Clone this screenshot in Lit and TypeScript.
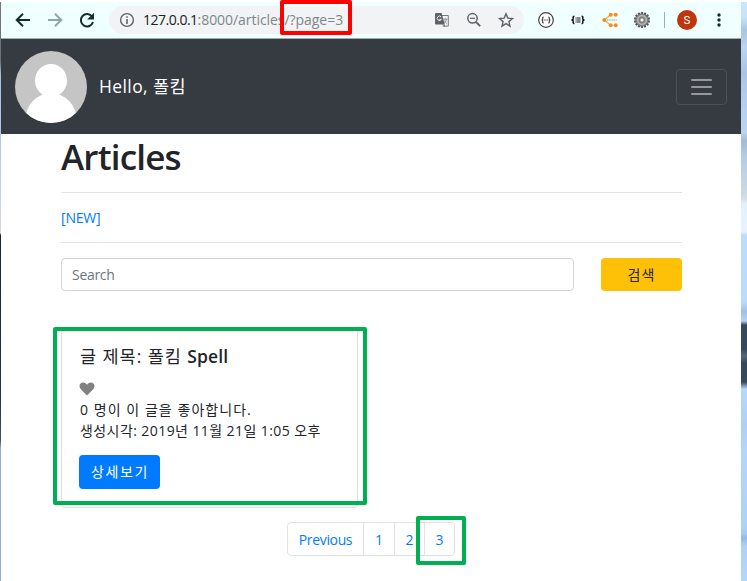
import { LitElement, html, css, svg } from "lit";
import { customElement } from "lit/decorators.js";

@customElement("browser-bar")
class BrowserBar extends LitElement {
  static styles = css`
    :host { display: flex; align-items: center; box-sizing: border-box; height: 37px; flex: none; background: #f0ffff; border-bottom: 1px solid #9aaead; padding-left: 11px; font-family: "Open Sans", "Noto Sans", sans-serif; }
    svg { display: block; flex: none; overflow: visible; }
    .nav { display: flex; gap: 12px; margin-right: 13px; }
    .omni { display: flex; align-items: center; width: 415px; height: 28px; border-radius: 14px; background: #f1f3f4; box-sizing: border-box; padding: 0 10px 0 10px; }
    .url { flex: 1; margin-left: 8px; font-size: 14px; line-height: 28px; white-space: pre; color: #80868b; letter-spacing: -0.05px; }
    .host { color: #202124; letter-spacing: -0.5px; }
    .tools { display: flex; gap: 16px; }
    .ext { display: flex; gap: 16px; margin-left: 14px; align-items: center; }
    .sep { width: 1px; height: 16px; background: #9aaead; margin: 0 12px 0 14px; }
    .user { width: 20px; height: 20px; border-radius: 50%; background: #bf360c; color: #fff; font: 11.5px/20px Roboto, sans-serif; text-align: center; margin-right: 20px; }
  `;
  render() {
    const teeth = Array.from({ length: 14 }, (_, i) => svg`<rect x="6.900" y="-0.100" width="2.200" height="3" rx=".6" transform="rotate(${(i * 360) / 14} 8 8)" />`);
    return html`
      <div class="nav">
        <svg width="20" height="20" viewBox="0 0 20 20" fill="none" stroke="#112f2c" stroke-width="2"><path d="M18 10H5M11 3.700 4.700 10l6.300 6.300" /></svg>
        <svg width="20" height="20" viewBox="0 0 20 20" fill="none" stroke="#8fa8a6" stroke-width="2"><path d="M4 10h13M11 3.700l6.300 6.300-6.300 6.300" /></svg>
        <svg width="20" height="20" viewBox="0 0 20 20"><path d="M16.200 6.700A6.200 6.200 0 1 0 17 12" fill="none" stroke="#112f2c" stroke-width="2" /><path d="M18 2.800v6.700h-6.800z" fill="#112f2c" /></svg>
      </div>
      <div class="omni">
        <svg width="16" height="16" viewBox="0 0 16 16"><circle cx="8" cy="8" r="6.400" fill="none" stroke="#5f6368" stroke-width="1.400" /><path d="M7.200 4.200h1.600v1.600H7.200zM7.200 7h1.600v5H7.200z" fill="#5f6368" /></svg>
        <div class="url"><span class="host">127.0.0.1</span>:8000/articles/?page=3</div>
        <div class="tools">
          <svg width="16" height="16" viewBox="0 0 16 16"><path d="M6 3.500h8.300v10.600H8.600" fill="none" stroke="#777b7f" stroke-width="1" /><path d="M2 1h5.600l3.200 11.400H2q-1 0-1-1V2q0-1 1-1z" fill="#5f6368" /><path d="M7.200 4.900a2.200 2.200 0 1 0 .2 2.400H5.500" fill="none" stroke="#f1f3f4" stroke-width="1" /><path d="M9.300 7.200h4M11.300 6.200v1M12.700 7.400q-.7 2.700-3 4M10.300 8.500q.8 2 2.500 3M8.500 12.400l2 2.300V12.400" fill="none" stroke="#777b7f" stroke-width=".8" /></svg>
          <svg width="16" height="16" viewBox="0 0 16 16" fill="none" stroke="#5f6368" stroke-width="1.500"><circle cx="6.500" cy="6.300" r="4.700" /><path d="m10 10 4.200 4.200" stroke-width="1.800" /><path d="M4 6.300h5" stroke-width="1.200" /></svg>
          <svg width="16" height="16" viewBox="0 0 16 16"><path d="m8 1.800 1.800 4.300 4.700.4-3.600 3.100 1.100 4.600-4-2.500-4 2.500 1.100-4.600L1.500 6.500l4.700-.4z" fill="none" stroke="#5f6368" stroke-width="1.400" /></svg>
        </div>
      </div>
      <div class="ext">
        <svg width="16" height="16" viewBox="0 0 16 16" fill="none" stroke="#444"><circle cx="8" cy="8" r="7.300" fill="#fff" stroke-width="1.200" /><path d="M5.700 5q-1.200 0-1 1.500T3.500 8q1.400 0 1.200 1.500t1 1.500M10.300 5q1.200 0 1 1.500T12.500 8q-1.400 0-1.200 1.500t-1 1.500" stroke-width="1.200" /><path d="M6.200 8h3.700" stroke-width="1.200" stroke-dasharray="1 .4" /></svg>
        <svg width="16" height="16" viewBox="0 0 16 16" fill="none" stroke="#111"><path d="M4.400 4.300q-1.500 0-1.200 1.900T1.500 8q2 0 1.700 1.800t1.200 1.900M11.600 4.300q1.500 0 1.200 1.900T14.500 8q-2 0-1.700 1.800t-1.200 1.900" stroke-width="1.500" /><path d="M5.500 6.500h5M5.500 8.500h5M5.500 10.500h5" transform="translate(0 -.5)" stroke-width="1" stroke-dasharray="1.200 .4 3.400 0" /></svg>
        <svg width="16" height="16" viewBox="0 0 16 16"><path d="M8.500 2.700 2.500 8l6 5.300" fill="none" stroke="#fb9a2c" stroke-width="1.100" /><path d="M8.500 2.700h5M8.500 13.300h5" stroke="#fcc07d" stroke-width=".8" /><g fill="#fb8c1a"><circle cx="8.700" cy="2.800" r="2" /><circle cx="13.700" cy="2.800" r="2" /><circle cx="2.300" cy="8" r="2" /><circle cx="8.700" cy="13.200" r="2" /><circle cx="13.700" cy="13.200" r="2" /></g><path d="M5 8h10.500" stroke="#b9c4b8" stroke-width="1.400" stroke-dasharray="1.200 .5" /></svg>
        <svg width="16" height="16" viewBox="0 0 16 16"><g fill="#555">${teeth}</g><circle cx="8" cy="8" r="6.200" fill="#8b8b8b" stroke="#6a6a6a" stroke-width=".6" /><circle cx="8" cy="8" r="4.300" fill="none" stroke="#bcbcbc" stroke-width="1.300" /><circle cx="8" cy="8" r="2.200" fill="#f2f2f2" stroke="#666" stroke-width=".9" /></svg>
      </div>
      <div class="sep"></div>
      <div class="user">S</div>
      <svg width="4" height="16" viewBox="0 0 4 16" fill="#112f2c"><circle cx="2" cy="3" r="1.700" /><circle cx="2" cy="8" r="1.700" /><circle cx="2" cy="13" r="1.700" /></svg>
    `;
  }
}

@customElement("app-root")
class AppRoot extends LitElement {
  static styles = css`
    :host { display: flex; position: relative; width: 747px; height: 581px; overflow: hidden; background: #fff; box-sizing: border-box; padding-top: 2px; color: #212529; font: 14px/21px "Open Sans", "Noto Sans", "Noto Sans CJK KR", sans-serif; }
    .left { width: 1px; flex: none; background: linear-gradient(#777 0, #6d7378 60px, #a5bfdf 72px, #b6cbe5 150px, #d4d8dd 225px, #e0dcda 231px, #1c2530 233px, #2b3544 400px, #46525f 438px, #8eaccc 446px, #8eaccc 100%); }
    .right { width: 6px; flex: none; background: linear-gradient(#cde5fd 0, #c8e2fc 15px, #a9c5e4 28px, #bad5f2 45px, #a9c5e6 70px, #b4d2f3 110px, #bbd5f2 130px, #a2bbd6 139px, #b3cce7 155px, #cbd8e5 190px, #d7dfe7 197px, #e4f0fc 202px, #e7f3fe 230px, #bbdcfd 233px, #b8dcff 300px, #9fc0df 310px, #b1d5f8 319px, #34495b 323px, #34495b 347px, #52687c 354px, #34495b 361px, #34495b 380px, #b5d9fd 387px, #add1f6 425px, #b3d7fc 450px, #add2f7 525px, #a4c9f0 532px, #92b9e9 536px, #add1f7 544px, #b2d7fc 100%); }
    .window { width: 740px; flex: none; display: flex; flex-direction: column; }
    .navbar { display: flex; align-items: center; box-sizing: border-box; height: 95px; flex: none; background: #363a41; padding: 0 14px; color: #fff; }
    .hello { margin: 0 0 2px 12px; flex: 1; font-size: 17.5px; line-height: 26px; white-space: nowrap; letter-spacing: 0.4px; }
    .toggler { width: 51px; height: 36px; box-sizing: border-box; border: 1px solid #4d5157; border-radius: 4px; display: flex; flex-direction: column; justify-content: center; align-items: center; gap: 5px; }
    .toggler i { width: 21px; height: 2px; background: #96989b; border-radius: 1px; }
    main { padding: 0 59px 0 60px; display: flex; flex-direction: column; }
    h1 { margin: 2px 0 0; font-size: 35px; line-height: 42px; font-weight: 600; height: 56px; letter-spacing: -0.8px; }
    .new { border: solid #e2e3e4; border-width: 1px 0; height: 49px; line-height: 49px; color: #007bff; letter-spacing: -0.2px; }
    .search { display: flex; justify-content: space-between; margin-top: 15px; }
    .field { width: 513px; height: 33px; border: 1px solid #ced4da; border-radius: 4px; box-sizing: border-box; padding-left: 10px; line-height: 32px; color: #6c757d; letter-spacing: -0.3px; }
    .go { width: 81px; height: 33px; border-radius: 4px; background: #ffc107; text-align: center; line-height: 33px; letter-spacing: 1px; }
    .card { width: 297px; height: 180px; margin-top: 37px; box-sizing: border-box; border: 1px solid #dfdfdf; border-radius: 4px; padding: 16px 17px 0 18px; display: flex; flex-direction: column; align-items: flex-start; white-space: nowrap; }
    h5 { margin: 0; font-size: 17.5px; line-height: 22px; font-weight: 400; height: 35px; letter-spacing: 0.95px; }
    h5 b { font-weight: 600; letter-spacing: 0.1px; }
    .heart { display: block; margin: 2px 0 3px -1px; }
    .likes { letter-spacing: 1.05px; }
    .time { letter-spacing: 0.42px; }
    .btn { margin: 14px 0 0 -1px; width: 81px; height: 34px; border-radius: 4px; background: #007bff; color: #fff; text-align: center; line-height: 34px; letter-spacing: 1.6px; text-indent: 1px; }
    .pages { display: flex; align-self: flex-start; margin: 14px 0 0 226px; height: 34px; box-sizing: border-box; border: 1px solid #dee2e6; border-radius: 4px; color: #007bff; line-height: 33px; text-align: center; }
    .pages span { width: 30px; box-sizing: border-box; border-left: 1px solid #dee2e6; }
    .pages span:first-child { width: 75px; border: 0; letter-spacing: -0.35px; }
    .pages span:nth-child(2) { width: 31px; }
    .mark { position: absolute; box-sizing: border-box; border: 4px solid #00b050; border-radius: 2px; }
    .m1 { left: 280px; top: 0; width: 72px; height: 35px; border-color: #f00; }
    .m2 { left: 53px; top: 327px; width: 314px; height: 178px; }
    .m3 { left: 416px; top: 516px; width: 50px; height: 49px; }
  `;
  render() {
    return html`
      <div class="left"></div>
      <div class="window">
        <browser-bar></browser-bar>
        <div class="navbar">
          <svg width="72" height="72" viewBox="0 0 72 72"><defs><clipPath id="c"><circle cx="36" cy="36" r="36" /></clipPath></defs><g clip-path="url(#c)"><path d="M0 0h72v72H0z" fill="#c5c5c5" /><ellipse cx="36" cy="29.500" rx="16" ry="16.500" fill="#fff" /><ellipse cx="36" cy="70" rx="26" ry="28" fill="#fff" /></g></svg>
          <div class="hello">Hello, 폴킴</div>
          <div class="toggler"><i></i><i></i><i></i></div>
        </div>
        <main>
          <h1>Articles</h1>
          <div class="new">[NEW]</div>
          <div class="search"><div class="field">Search</div><div class="go">검색</div></div>
          <div class="card">
            <h5>글 제목: 폴킴 <b>Spell</b></h5>
            <svg class="heart" width="16" height="14" viewBox="0 0 16 14"><path d="M8 13.500 1.800 7.200C-1 3.800 1.300.6 4 .6 6 .6 7.200 1.700 8 2.800 8.800 1.700 10 .6 12 .6c2.700 0 5 3.200 2.200 6.600z" fill="#808080" /></svg>
            <div class="likes">0 명이 이 글을 좋아합니다.</div>
            <div class="time">생성시각: 2019년 11월 21일 1:05 오후</div>
            <div class="btn">상세보기</div>
          </div>
          <div class="pages"><span>Previous</span><span>1</span><span>2</span><span>3</span></div>
        </main>
      </div>
      <div class="right"></div>
      <div class="mark m1"></div><div class="mark m2"></div><div class="mark m3"></div>
    `;
  }
}
